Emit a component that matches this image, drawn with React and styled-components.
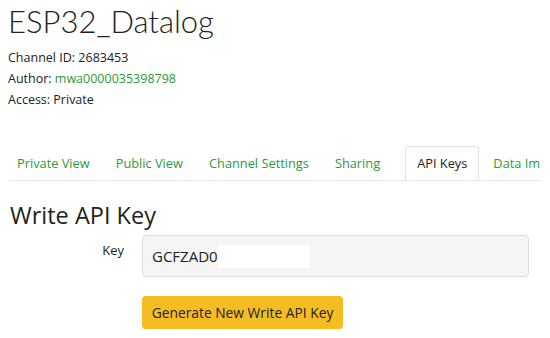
import styled, { createGlobalStyle } from 'styled-components';

const GlobalStyle = createGlobalStyle`
    html, body {
        margin: 0;
        padding: 0;
        background: #fff;
    }
    body {
        font-family: "Open Sans", "Liberation Sans", sans-serif;
        color: #222;
    }
`;

const tabs = [
    { label: "Private View" },
    { label: "Public View" },
    { label: "Channel Settings" },
    { label: "Sharing" },
    { label: "API Keys", active: true },
    { label: "Data Import / Export" },
];

export default function App() {
    return (
        <Wrap>
            <GlobalStyle />
            <Title>ESP32_Datalog</Title>
            <Meta>
                <MetaLine>Channel ID: 2683453</MetaLine>
                <MetaLine>Author: <Green>mwa0000035398798</Green></MetaLine>
                <MetaLine>Access: Private</MetaLine>
            </Meta>
            <TabBar>
                {tabs.map((t) => (
                    <Tab key={t.label} active={t.active}>{t.label}</Tab>
                ))}
            </TabBar>
            <SectionTitle>Write API Key</SectionTitle>
            <FormRow>
                <Label>Key</Label>
                <KeyBox>
                    GCFZAD0
                    <Mask />
                </KeyBox>
            </FormRow>
            <ButtonRow>
                <YellowButton>Generate New Write API Key</YellowButton>
            </ButtonRow>
        </Wrap>
    );
}

const Wrap = styled.div`
    width: 550px;
    height: 338px;
    overflow: hidden;
    padding: 0 0 0 8px;
    box-sizing: border-box;
`;

const Title = styled.h1`
    margin: 0;
    padding-top: 2px;
    font-family: "Lato", sans-serif;
    font-weight: 300;
    font-size: 31px;
    line-height: 38px;
    color: #222;
`;

const Meta = styled.div`
    margin-top: 7px;
    display: flex;
    flex-direction: column;
`;

const MetaLine = styled.div`
    font-size: 12.5px;
    line-height: 21px;
    color: #222;
`;

const Green = styled.span`
    color: #2e9a3c;
`;

const TabBar = styled.div`
    margin-top: 36px;
    width: 532px;
    height: 34px;
    display: flex;
    border-bottom: 1px solid #e4e4e4;
    white-space: nowrap;
    overflow: hidden;
`;

const Tab = styled.div`
    flex-shrink: 0;
    padding: 0 11px;
    margin-left: ${({ active }) => (active ? '11px' : '0')};
    margin-right: 2px;
    font-size: 12.8px;
    line-height: 33px;
    color: ${({ active }) => (active ? '#222' : '#2e9a3c')};
    border: 1px solid ${({ active }) => (active ? '#e4e4e4' : 'transparent')};
    border-bottom: 1px solid ${({ active }) => (active ? '#fff' : 'transparent')};
    border-radius: 4px 4px 0 0;
    background: #fff;
    margin-bottom: -1px;
    &:first-child {
        padding-left: 8px;
    }
`;

const SectionTitle = styled.h2`
    margin: 19px 0 0 2px;
    font-family: "Open Sans", sans-serif;
    font-weight: 400;
    font-size: 23.5px;
    line-height: 31px;
    color: #222;
`;

const FormRow = styled.div`
    margin-top: 4px;
    display: flex;
    align-items: flex-start;
`;

const Label = styled.div`
    width: 134px;
    text-align: right;
    padding-right: 18px;
    box-sizing: border-box;
    font-size: 13px;
    line-height: 31px;
    color: #222;
`;

const KeyBox = styled.div`
    width: 387px;
    height: 42px;
    box-sizing: border-box;
    display: flex;
    align-items: center;
    padding-left: 9px;
    background: #f5f5f5;
    border: 1px solid #dcdcdc;
    border-radius: 4px;
    font-size: 15px;
    color: #222;
`;

const Mask = styled.div`
    width: 92px;
    height: 23px;
    background: #fff;
`;

const ButtonRow = styled.div`
    margin-top: 19px;
    padding-left: 134px;
`;

const YellowButton = styled.button`
    width: 201px;
    height: 33px;
    border: none;
    border-radius: 4px;
    background: #f6bd22;
    font-family: "Open Sans", sans-serif;
    font-size: 13.8px;
    color: #222;
    cursor: pointer;
`;
